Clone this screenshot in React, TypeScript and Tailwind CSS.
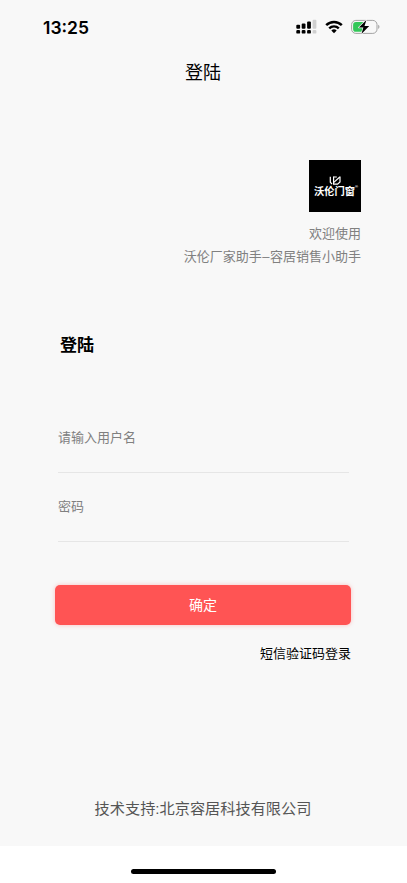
import { useState } from "react";

const SignalIcon = () => (
  <svg width="21" height="16" viewBox="0 0 21 16" fill="#000">
    <rect x="0.3" y="5.8" width="3.8" height="3.9" rx="1" />
    <rect x="5.7" y="4.6" width="3.8" height="5.1" rx="1" />
    <rect x="11.1" y="2.6" width="3.8" height="7.1" rx="1" />
    <rect x="16.6" y="0.8" width="3.8" height="8.9" rx="1" fill="#cfcfcf" />
    <rect x="0.3" y="10.9" width="3.8" height="3.7" rx="1.2" />
    <rect x="5.7" y="10.9" width="3.8" height="3.7" rx="1.2" />
    <rect x="11.1" y="10.9" width="3.8" height="3.7" rx="1.2" />
    <rect x="16.6" y="10.9" width="3.8" height="3.7" rx="1.2" fill="#cfcfcf" />
  </svg>
);

const WifiIcon = () => (
  <svg width="18" height="14" viewBox="0 0 18 14" fill="none" stroke="#000">
    <path d="M1.2 5.1a11.2 11.2 0 0 1 15.6 0" strokeWidth="2.5" />
    <path d="M4.2 8.3a6.9 6.9 0 0 1 9.6 0" strokeWidth="2.4" />
    <path d="M9 13.2 6.3 10.5a3.9 3.9 0 0 1 5.4 0z" fill="#000" stroke="none" />
  </svg>
);

const BatteryIcon = () => (
  <svg width="29" height="16" viewBox="0 0 29 16">
    <rect x="0.6" y="1.4" width="25.4" height="13" rx="4.2" fill="none" stroke="#a3a3a3" />
    <path d="M5 3h8v9.8H5a2.9 2.9 0 0 1-2.9-2.9v-4A2.9 2.9 0 0 1 5 3z" fill="#34c759" />
    <path d="M27.2 5.8c1.7.7 1.7 3.5 0 4.2z" fill="#a3a3a3" />
    <path
      d="M15.4 1 7.9 8.6h4.5l-2 6.3 7.8-8h-4.7z"
      fill="#000"
      stroke="#f8f8f8"
      strokeWidth="1.4"
      strokeLinejoin="round"
      paintOrder="stroke"
    />
  </svg>
);

const BrandLogo = () => (
  <div className="flex h-[52px] w-[52px] flex-col items-center bg-black pt-[16px] pr-[1px] text-white">
    <svg width="12" height="9" viewBox="0 0 12 9" className="shrink-0" fill="none" stroke="#fff" strokeWidth="1.2">
      <path d="M1.3 0.8v5.4L3 8.2" />
      <path d="M4.6 0.6v7.5h4L11 6V0.6" />
      <path d="M4.6 1h3.2M4.8 6.4 10.8 1" />
    </svg>
    <div className="relative mt-[1px] whitespace-nowrap text-[10.3px] leading-[12px] font-bold">
      沃伦门窗
      <span className="absolute top-[-4px] left-full text-[4px] leading-[10px]">®</span>
    </div>
  </div>
);

const App = () => {
  const [username, setUsername] = useState("");
  const [password, setPassword] = useState("");

  return (
    <div className="flex h-[883px] w-[407px] flex-col overflow-hidden bg-white font-['Liberation_Sans','Noto_Sans_CJK_SC',sans-serif] text-black">
      <div className="flex h-[846px] flex-col bg-[#f8f8f8]">

        {/* STATUS BAR */}
        <div className="flex h-[55px] items-center justify-between pt-[1px] pr-[27px] pl-[43px]">
          <span className="font-['Inter',sans-serif] text-[17.5px] leading-6 font-semibold">
            13:25
          </span>
          <div className="flex items-center gap-[8px] pb-[2px]">
            <SignalIcon />
            <WifiIcon />
            <BatteryIcon />
          </div>
        </div>

        {/* NAV */}
        <div className="flex h-[35px] items-center justify-center pt-[1px] pr-[1px] text-[18px]">登陆</div>

        {/* BRAND */}
        <div className="flex flex-col items-end pt-[70px] pr-[46px] text-[13px] text-[#808080]">
          <BrandLogo />
          <p className="mt-[10px] leading-[23px]">欢迎使用</p>
          <p className="leading-[23px]">沃伦厂家助手<span className="px-[0.5px]">–</span>容居销售小助手</p>
        </div>

        {/* FORM */}
        <div className="mt-[66px] px-[58px]">
          <h1 className="pl-[2px] text-[17px] leading-6 font-bold">登陆</h1>
          <input
            value={username}
            onChange={(e) => setUsername(e.target.value)}
            placeholder="请输入用户名"
            className="mt-[46px] block h-[69px] w-full border-b border-[#e6e6e6] pb-[1px] text-[13px] outline-none placeholder:text-[#808080]"
          />
          <input
            type="password"
            value={password}
            onChange={(e) => setPassword(e.target.value)}
            placeholder="密码"
            className="block h-[69px] w-full border-b border-[#e6e6e6] pb-[2px] text-[13px] outline-none placeholder:text-[#808080]"
          />
        </div>

        {/* ACTIONS */}
        <div className="mt-[43px] flex flex-col items-end pr-[56px] pl-[55px]">
          <button className="h-[40px] w-full rounded-[5px] bg-[#ff5454] text-[14px] text-white shadow-[0_0_4px_rgba(255,84,84,0.35)]">
            确定
          </button>
          <button className="mt-[19px] text-[13px] leading-5">短信验证码登录</button>
        </div>

        <p className="mt-auto pr-[1px] pb-[25px] text-center text-[15.2px] leading-6 text-[#555]">
          技术支持:北京容居科技有限公司
        </p>
      </div>

      {/* HOME INDICATOR */}
      <div className="flex flex-1 justify-center pt-[23px]">
        <div className="h-[5px] w-[145px] rounded-full bg-black" />
      </div>
    </div>
  );
};

export default App;
